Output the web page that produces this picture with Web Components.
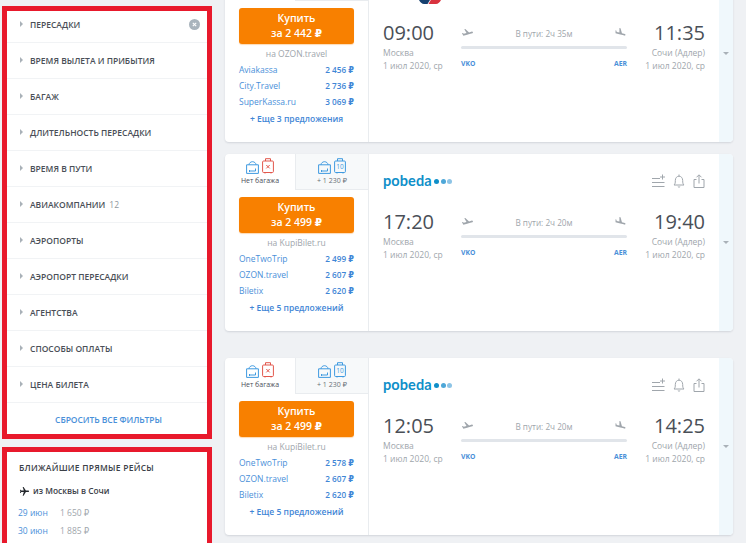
<!DOCTYPE html>
<html lang="ru">
<head>
<meta charset="utf-8">
<title>Рейсы</title>
<style>
html,body{margin:0;padding:0;height:543px;overflow:hidden;background:#eff1f4;font-family:"Open Sans","DejaVu Sans",sans-serif}
</style>
</head>
<body>
<search-page>
  <filter-panel slot="side">
    <filter-row active>ПЕРЕСАДКИ</filter-row>
    <filter-row>ВРЕМЯ ВЫЛЕТА И ПРИБЫТИЯ</filter-row>
    <filter-row>БАГАЖ</filter-row>
    <filter-row>ДЛИТЕЛЬНОСТЬ ПЕРЕСАДКИ</filter-row>
    <filter-row>ВРЕМЯ В ПУТИ</filter-row>
    <filter-row count="12">АВИАКОМПАНИИ</filter-row>
    <filter-row>АЭРОПОРТЫ</filter-row>
    <filter-row>АЭРОПОРТ ПЕРЕСАДКИ</filter-row>
    <filter-row>АГЕНТСТВА</filter-row>
    <filter-row>СПОСОБЫ ОПЛАТЫ</filter-row>
    <filter-row>ЦЕНА БИЛЕТА</filter-row>
  </filter-panel>
  <direct-flights slot="side"></direct-flights>

  <offer-card slot="main" price="2 442" agent="OZON.travel" dep="09:00" arr="11:35" dur="2ч 35м" more="+ Еще 3 предложения" logo="partial"
    offers="Aviakassa|2 456;City.Travel|2 736;SuperKassa.ru|3 069"></offer-card>
  <offer-card slot="main" price="2 499" agent="KupiBilet.ru" dep="17:20" arr="19:40" dur="2ч 20м" more="+ Еще 5 предложений" logo="pobeda" tabs
    offers="OneTwoTrip|2 499;OZON.travel|2 607;Biletix|2 620"></offer-card>
  <offer-card slot="main" price="2 499" agent="KupiBilet.ru" dep="12:05" arr="14:25" dur="2ч 20м" more="+ Еще 5 предложений" logo="pobeda" tabs spaced
    offers="OneTwoTrip|2 578;OZON.travel|2 607;Biletix|2 620"></offer-card>
</search-page>

<script>
const TAKEOFF='M21.9 9.6c-.2-.8-1-1.3-1.8-1.1L14.9 10 8 3.6l-1.9.5 4.1 7.2-5 1.3-1.9-1.5-1.5.4 1.8 3.1.8 1.4 1.6-.4 5.3-1.5 4.4-1.1 5.3-1.5c.8-.2 1.3-1.1 1.1-1.9z';
const LAND='M9.7 13.3l4.3 1.1 5.3 1.5c.8.2 1.6-.3 1.8-1.1.2-.8-.3-1.6-1-1.8l-5.4-1.5-2.7-9-2-.5v8.3L5.1 9l-.9-2.4-1.4-.4v5.2l1.6.4 5.3 1.5z';
const ROOT='font-family:"Open Sans","DejaVu Sans",sans-serif;';

function shadow(el,html){el.attachShadow({mode:'open'}).innerHTML=html;}

customElements.define('search-page',class extends HTMLElement{
  constructor(){super();shadow(this,`<style>
    :host{display:grid;grid-template-columns:210px 508px;column-gap:13px;padding-left:2px;${ROOT}}
    .side{display:flex;flex-direction:column;gap:8px;padding-top:6px}
    .main{display:flex;flex-direction:column;gap:12px;margin-top:-35px}
  </style><div class="side"><slot name="side"></slot></div><div class="main"><slot name="main"></slot></div>`);}
});

customElements.define('filter-panel',class extends HTMLElement{
  constructor(){super();shadow(this,`<style>
    :host{display:block;background:#fff;border:5px solid #e8192c;height:423px;box-sizing:content-box}
    .list{margin-top:-5px;padding-top:.5px;display:flex;flex-direction:column}
    .reset{height:36px;margin-top:-1.500px;padding-left:3px;display:flex;align-items:center;justify-content:center;font-size:8.5px;font-weight:600;color:#4a90d9;letter-spacing:-.05px}
  </style><div class="list"><slot></slot></div><div class="reset">СБРОСИТЬ ВСЕ ФИЛЬТРЫ</div>`);}
});

customElements.define('filter-row',class extends HTMLElement{
  constructor(){super();
    const c=this.getAttribute('count');
    const a=this.hasAttribute('active');
    shadow(this,`<style>
    :host{display:flex;align-items:center;height:36px;box-sizing:border-box;border-bottom:1px solid #f1f3f5;padding-left:13px;padding-right:7px;font-size:8.5px;font-weight:600;color:#4a4f57}
    .arrow{width:0;height:0;border-left:3px solid #a9b1b8;border-top:3px solid transparent;border-bottom:3px solid transparent;margin-right:7px}
    .count{font-weight:400;color:#8f979e;margin-left:4px;font-size:8.5px}
    svg{margin-left:auto}
    </style><span class="arrow"></span><span><slot></slot></span>${c?`<span class="count">${c}</span>`:''}${a?`<svg width="11" height="11" viewBox="0 0 11 11"><circle cx="5.5" cy="5.5" r="5.5" fill="#a9b4bd"/><path d="M3.8 3.8l3.4 3.4M7.200 3.800L3.800 7.200" stroke="#fff" stroke-width="1.100"/></svg>`:''}`);}
});

customElements.define('direct-flights',class extends HTMLElement{
  constructor(){super();shadow(this,`<style>
    :host{display:block;background:#fff;border:5px solid #e8192c;height:88px;padding:10px 0 0 11px;box-sizing:content-box;margin-bottom:-12px;color:#3c4148}
    h3{margin:0;font-size:8.5px;line-height:12px;font-weight:600;letter-spacing:.25px;margin-left:1px;color:#3c4148}
    .dir{display:flex;align-items:center;gap:3px;margin:11px 0 0 1px;height:12px;font-size:8.4px;font-weight:600;line-height:12px}
    .day{display:flex;font-size:8.5px;line-height:12px;height:12px;margin-top:6px;color:#a0a6ac}
    .d{width:42px;color:#4a90d9}
    .dir + .day{margin-top:10px}
    </style><h3>БЛИЖАЙШИЕ ПРЯМЫЕ РЕЙСЫ</h3>
    <div class="dir"><svg width="11" height="11" viewBox="0 0 24 24" style="transform:rotate(90deg)"><path fill="#23272c" d="M21 16v-2l-8-5V3.500c0-.83-.67-1.500-1.500-1.500S10 2.670 10 3.500V9l-8 5v2l8-2.500V19l-2 1.500V22l3.500-1 3.500 1v-1.500L13 19v-5.500l8 2.500z"/></svg><span>из Москвы в Сочи</span></div>
    <div class="day"><span class="d">29 июн</span><span>1 650 ₽</span></div>
    <div class="day"><span class="d">30 июн</span><span>1 885 ₽</span></div>`);}
});

customElements.define('bag-tab',class extends HTMLElement{
  constructor(){super();
    const blue='#3f9ae0',red='#e2574c';
    const soft=`<svg width="13" height="13" viewBox="0 0 13 13" fill="none" stroke="${blue}" stroke-width="1"><path d="M.6 3.800h11.800v8.600H.6z"/><path d="M3 3.800C3 2 4.800.7 6.500.7S10 2 10 3.800"/><path d="M3.500 10h6V7.500M3.500 9v2"/></svg>`;
    const hard=(inner,c)=>`<svg width="12" height="16" viewBox="0 0 12 16" fill="none" stroke="${c}" stroke-width="1"><rect x=".6" y="3" width="10.800" height="11.500" rx="1"/><path d="M3.500 3V.7h5V3M3 14.500v1M9 14.500v1"/>${inner}</svg>`;
    const none=this.hasAttribute('none');
    const second=none?hard(`<path d="M4.300 7l3.400 3.400M7.700 7l-3.400 3.400" stroke-width="1"/>`,red):hard(`<text x="6" y="11" font-size="6.500" font-family="Open Sans" fill="${blue}" stroke="none" text-anchor="middle">10</text>`,blue);
    shadow(this,`<style>
    :host{display:flex;flex-direction:column;align-items:center;justify-content:flex-start;box-sizing:border-box;height:36px;padding-top:3px;font-size:7px;color:${none?'#4a4f57':'#6a7078'}}
    .i{display:flex;gap:3px;align-items:flex-end;height:17px}
    span{line-height:10px;margin-top:2px}
    </style><div class="i">${soft}${second}</div><span><slot></slot></span>`);}
});

customElements.define('offer-card',class extends HTMLElement{
  constructor(){super();
    const g=n=>this.getAttribute(n)||'';
    const rows=g('offers').split(';').map(s=>{const[a,p]=s.split('|');return `<div class="o"><span>${a}</span><b>${p} ₽</b></div>`}).join('');
    const tabs=this.hasAttribute('tabs');
    const logo=g('logo')==='pobeda'
      ?`<div class="logo"><span>pobeda</span><i style="background:#0f8fc9"></i><i style="background:#4ea7d8"></i><i style="background:#8dc4e6"></i></div>`
      :`<svg class="air" width="22" height="4" viewBox="0 0 22 4"><path d="M0 0h11L8.500 4H5C3 4 1 2 0 0z" fill="#16406f"/><path d="M11.800 0H22c-1 2-3 4-5 4h-7.500z" fill="#d9333f"/></svg>`;
    shadow(this,`<style>
    :host{display:grid;grid-template-columns:144px 1fr 14px;height:177px;background:#fff;border-radius:4px;box-shadow:0 1px 2px rgba(60,70,90,.16);overflow:hidden;${this.hasAttribute('spaced')?'margin-top:15px;':''}color:#4a4f57}
    .buy{border-right:1px solid #e9ecef;display:flex;flex-direction:column}
    .tabs{display:grid;grid-template-columns:70px 73px;height:36px;flex:none}
    .tabs > :last-child{background:#f7f9fa;border-left:1px solid #e9ecef;border-bottom:1px solid #e9ecef}
    .btn{margin:7px 14px 0;height:36px;box-sizing:border-box;background:#f88000;border-radius:3px;color:#fff;font-size:10.500px;font-weight:600;line-height:15px;text-align:center;padding-top:3px;box-shadow:0 1px 1px rgba(248,128,0,.3);flex:none}
    .via{font-size:8.500px;line-height:12px;color:#a0a6ac;text-align:center;margin-top:4px}
    .o{display:flex;justify-content:space-between;margin:0 14px;font-size:8.500px;line-height:12px;height:16px;align-items:center;color:#4a90d9}
    .via + .o{margin-top:2px}
    .o b{font-weight:600;font-size:8.200px;color:#3f86d6}
    .more{text-align:center;font-size:8.500px;font-weight:600;color:#3f86d6;line-height:12px;margin-top:3px}
    .info{padding:0 14px;display:flex;flex-direction:column;position:relative}
    .top{height:54px;display:flex;align-items:center;justify-content:space-between;flex:none}
    .logo{display:flex;align-items:center;gap:1.500px;font-family:"Lato","Open Sans",sans-serif;font-weight:700;font-size:14.500px;color:#0f8fc9;letter-spacing:.1px}
    .logo span{margin-right:1px;line-height:15px;position:relative;top:-1px}
    .logo i{width:5px;height:5px;border-radius:50%;display:block}
    .air{position:absolute;left:50px;top:35px}
    .acts{display:flex;gap:8px;align-items:center}
    .flight{display:grid;grid-template-columns:78px 1fr 78px}
    .t{font-size:20px;line-height:28px;font-weight:400;color:#4a4f57}
    .c,.d{font-size:8.500px;line-height:13px;color:#a0a6ac;white-space:nowrap}
    .c{margin-top:-1px}
    .r{text-align:right}
    .route{display:grid;grid-template-columns:auto 1fr auto;align-items:center;height:28px;position:relative}
    .dur{text-align:center;font-size:8.200px;color:#a0a6ac}
    .line{height:3px;background:#e1e5ea;border-radius:2px;margin-top:-1px}
    .codes{display:flex;justify-content:space-between;font-size:6.800px;font-weight:700;color:#4a90d9;margin-top:10px;line-height:10px}
    .exp{background:#f0f8fc;display:flex;align-items:center;justify-content:center}
    .exp span{width:0;height:0;border-top:3.500px solid #a9b1b8;border-left:3px solid transparent;border-right:3px solid transparent}
    </style>
    <div class="buy">
      ${tabs?`<div class="tabs"><bag-tab none>Нет багажа</bag-tab><bag-tab>+ 1 230 ₽</bag-tab></div>`:`<div class="tabs"><div></div><div></div></div>`}
      <div class="btn">Купить<br>за ${g('price')} ₽</div>
      <div class="via">на ${g('agent')}</div>
      ${rows}
      <div class="more">${g('more')}</div>
    </div>
    <div class="info">
      <div class="top">${logo}${tabs?`<div class="acts">
        <svg width="13" height="14" viewBox="0 0 13 14" fill="none" stroke="#a0a6ac" stroke-width="1"><path d="M0 4.500h8M0 8.500h12.500M0 12.500h12.500M10.500 .5v5M8 3h5"/></svg>
        <svg width="12" height="14" viewBox="0 0 12 14" fill="none" stroke="#a0a6ac" stroke-width="1"><path d="M1 11c1.200-1.200 1.300-2 1.300-4.500C2.300 3.800 4 2.200 6 2.200s3.700 1.600 3.700 4.300c0 2.500.1 3.300 1.300 4.500zM6 .5v1.700M4.800 12.500c.3.700 2.100.7 2.400 0"/></svg>
        <svg width="12" height="14" viewBox="0 0 12 14" fill="none" stroke="#a0a6ac" stroke-width="1"><path d="M3.500 5.500H1v8h10v-8H8.500M6 9.500V1M3.500 3.300L6 .8l2.500 2.500"/></svg>
      </div>`:''}</div>
      <div class="flight">
        <div><div class="t">${g('dep')}</div><div class="c">Москва</div><div class="d">1 июл 2020, ср</div></div>
        <div>
          <div class="route">
            <svg width="13" height="13" viewBox="0 0 24 24"><path fill="#a0a6ac" d="${TAKEOFF}"/></svg>
            <div class="dur">В пути: ${g('dur')}</div>
            <svg width="13" height="13" viewBox="0 0 24 24"><path fill="#a0a6ac" d="${LAND}"/></svg>
          </div>
          <div class="line"></div>
          <div class="codes"><span>VKO</span><span>AER</span></div>
        </div>
        <div class="r"><div class="t">${g('arr')}</div><div class="c">Сочи (Адлер)</div><div class="d">1 июл 2020, ср</div></div>
      </div>
    </div>
    <div class="exp"><span></span></div>`);}
});
</script>
</body>
</html>
